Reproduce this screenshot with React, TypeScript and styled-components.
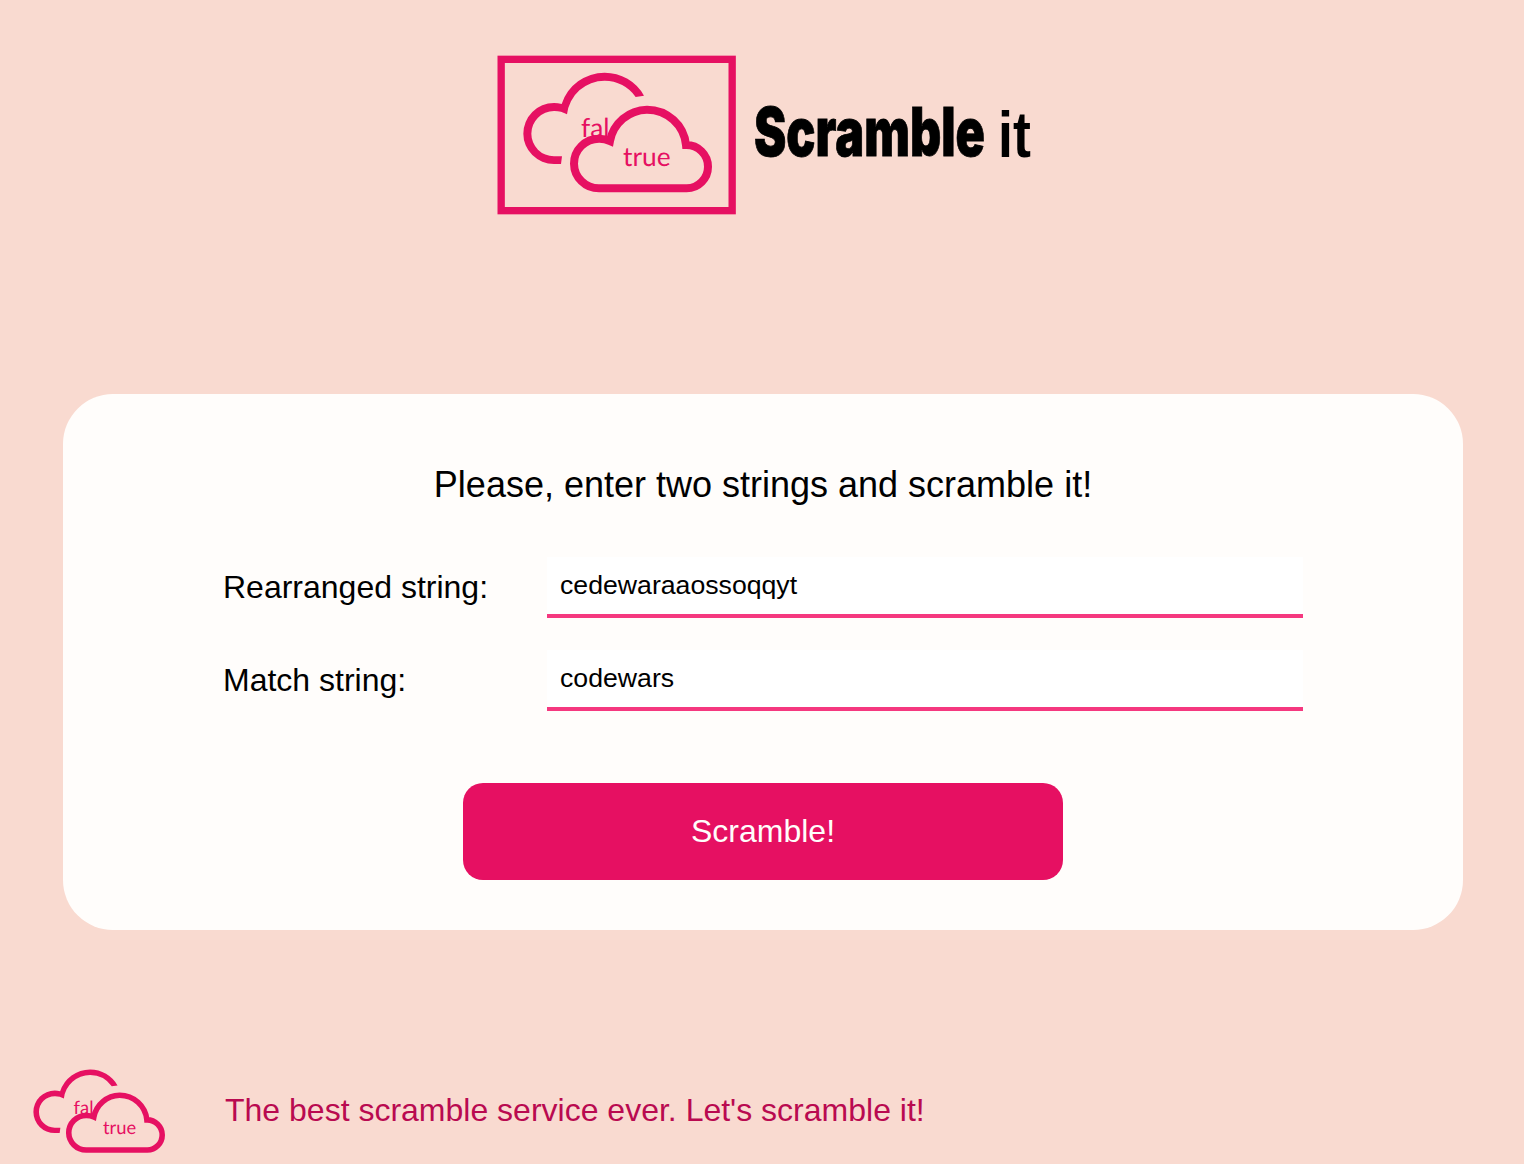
import React, { useState } from "react";
import styled, { createGlobalStyle } from "styled-components";

const pink = "#e61062";
const blush = "#f9dad0";

const GlobalStyle = createGlobalStyle`
  *, *::before, *::after { box-sizing: border-box; }
  body {
    margin: 0;
    background: ${blush};
    color: #000;
    font-family: "Liberation Sans", Arial, sans-serif;
  }
`;

const Page = styled.div`
  display: flex;
  flex-direction: column;
  height: 1164px;
  padding-left: 2px;
  overflow: hidden;
`;

const Header = styled.header`
  display: flex;
  align-items: flex-start;
  height: 394px;
  padding: 55px 0 0 495px;
`;

const Brand = styled.svg`
  display: block;
  flex: none;
  width: 300px;
  height: 120px;
  margin: 35px 0 0 3px;
`;

const Logo = styled.svg<{ $width: number; $height: number }>`
  display: block;
  flex: none;
  width: ${(p) => p.$width}px;
  height: ${(p) => p.$height}px;
`;

const CloudText = styled.text`
  fill: ${pink};
  font-family: Lato, sans-serif;
  font-size: 79px;
  text-rendering: geometricPrecision;
`;

const Card = styled.form`
  display: flex;
  flex-direction: column;
  align-items: center;
  align-self: center;
  width: 1400px;
  height: 536px;
  padding: 70px 160px 50px;
  border-radius: 50px;
  background: #fffdfb;
`;

const Heading = styled.h1`
  margin: 0 0 52px;
  font-size: 36px;
  font-weight: 400;
  line-height: 41px;
`;

const Field = styled.label`
  display: flex;
  align-items: center;
  justify-content: space-between;
  width: 100%;
  height: 61px;
  margin-bottom: 32px;
  font-size: 32px;
`;

const Input = styled.input`
  width: 756px;
  height: 61px;
  padding: 0 13px 1px;
  border: 0;
  border-bottom: 4px solid #f5387f;
  border-radius: 0;
  outline: none;
  background: #fff;
  color: #000;
  font: 26.66px "Liberation Sans", Arial, sans-serif;
`;

const Submit = styled.button`
  width: 600px;
  height: 97px;
  margin-top: auto;
  padding: 0;
  border: 0;
  border-radius: 20px;
  background: ${pink};
  color: #fffdfb;
  font: 32px "Liberation Sans", Arial, sans-serif;
`;

const Footer = styled.footer`
  display: flex;
  align-items: center;
  gap: 59px;
  margin-top: 138px;
  padding-left: 30px;
`;

const Tagline = styled.p`
  margin: 0 0 2px;
  color: #b90a50;
  font-size: 32px;
  line-height: 36px;
`;

const Clouds = () => (
  <>
    <path
      fill={pink}
      d="M462 152A135.4 135.4 0 0 0 344 83A135.4 135.4 0 0 0 215 177A92 92 0 0 0 192 174A92 92 0 0 0 100 266A92 91 0 0 0 192 357H213L216 334H192A68 68 0 0 1 124 266A68 68 0 0 1 192 198A75 75 0 0 1 231 208A113.5 113.5 0 0 1 344 107A113 113 0 0 1 437 156Z"
    />
    <CloudText x="273" y="275">
      fal
    </CloudText>
    <path
      fill={blush}
      stroke={pink}
      strokeWidth="24"
      strokeMiterlimit="10"
      d="M360 288A75 75 0 0 0 327 281A75 75 0 0 0 252 356A75 75 0 0 0 327 430H590A65 65 0 0 0 654 365A65 65 0 0 0 588 300A117.6 117.6 0 0 0 471 194A115 115 0 0 0 360 288Z"
    />
    <CloudText x="399" y="362">
      true
    </CloudText>
  </>
);

export default function App() {
  const [source, setSource] = useState("cedewaraaossoqqyt");
  const [match, setMatch] = useState("codewars");

  return (
    <Page>
      <GlobalStyle />
      <Header>
        <Logo $width={240} $height={160} viewBox="21 30 720 480">
          <rect x="33.5" y="43" width="693" height="454" fill="none" stroke={pink} strokeWidth="22" />
          <Clouds />
        </Logo>
        <Brand viewBox="0 0 300 120">
          <text
            transform="translate(14 66) scale(0.7 1)"
            fontFamily="Inter, sans-serif"
            fontSize="67"
            fontWeight="900"
            stroke="#000"
            strokeWidth="0.8"
            textLength="330"
            lengthAdjust="spacingAndGlyphs"
          >
            Scramble
          </text>
          <text
            transform="translate(258 66.7) scale(0.84 1)"
            fontFamily="Liberation Sans, Arial, sans-serif"
            fontSize="64"
            fontWeight="700"
          >
            it
          </text>
        </Brand>
      </Header>
      <Card onSubmit={(e) => e.preventDefault()}>
        <Heading>Please, enter two strings and scramble it!</Heading>
        <Field>
          Rearranged string:
          <Input value={source} onChange={(e) => setSource(e.target.value)} />
        </Field>
        <Field>
          Match string:
          <Input value={match} onChange={(e) => setMatch(e.target.value)} />
        </Field>
        <Submit>Scramble!</Submit>
      </Card>
      <Footer>
        <Logo $width={134} $height={86} viewBox="94 77 576.3 369.9">
          <Clouds />
        </Logo>
        <Tagline>The best scramble service ever. Let's scramble it!</Tagline>
      </Footer>
    </Page>
  );
}
